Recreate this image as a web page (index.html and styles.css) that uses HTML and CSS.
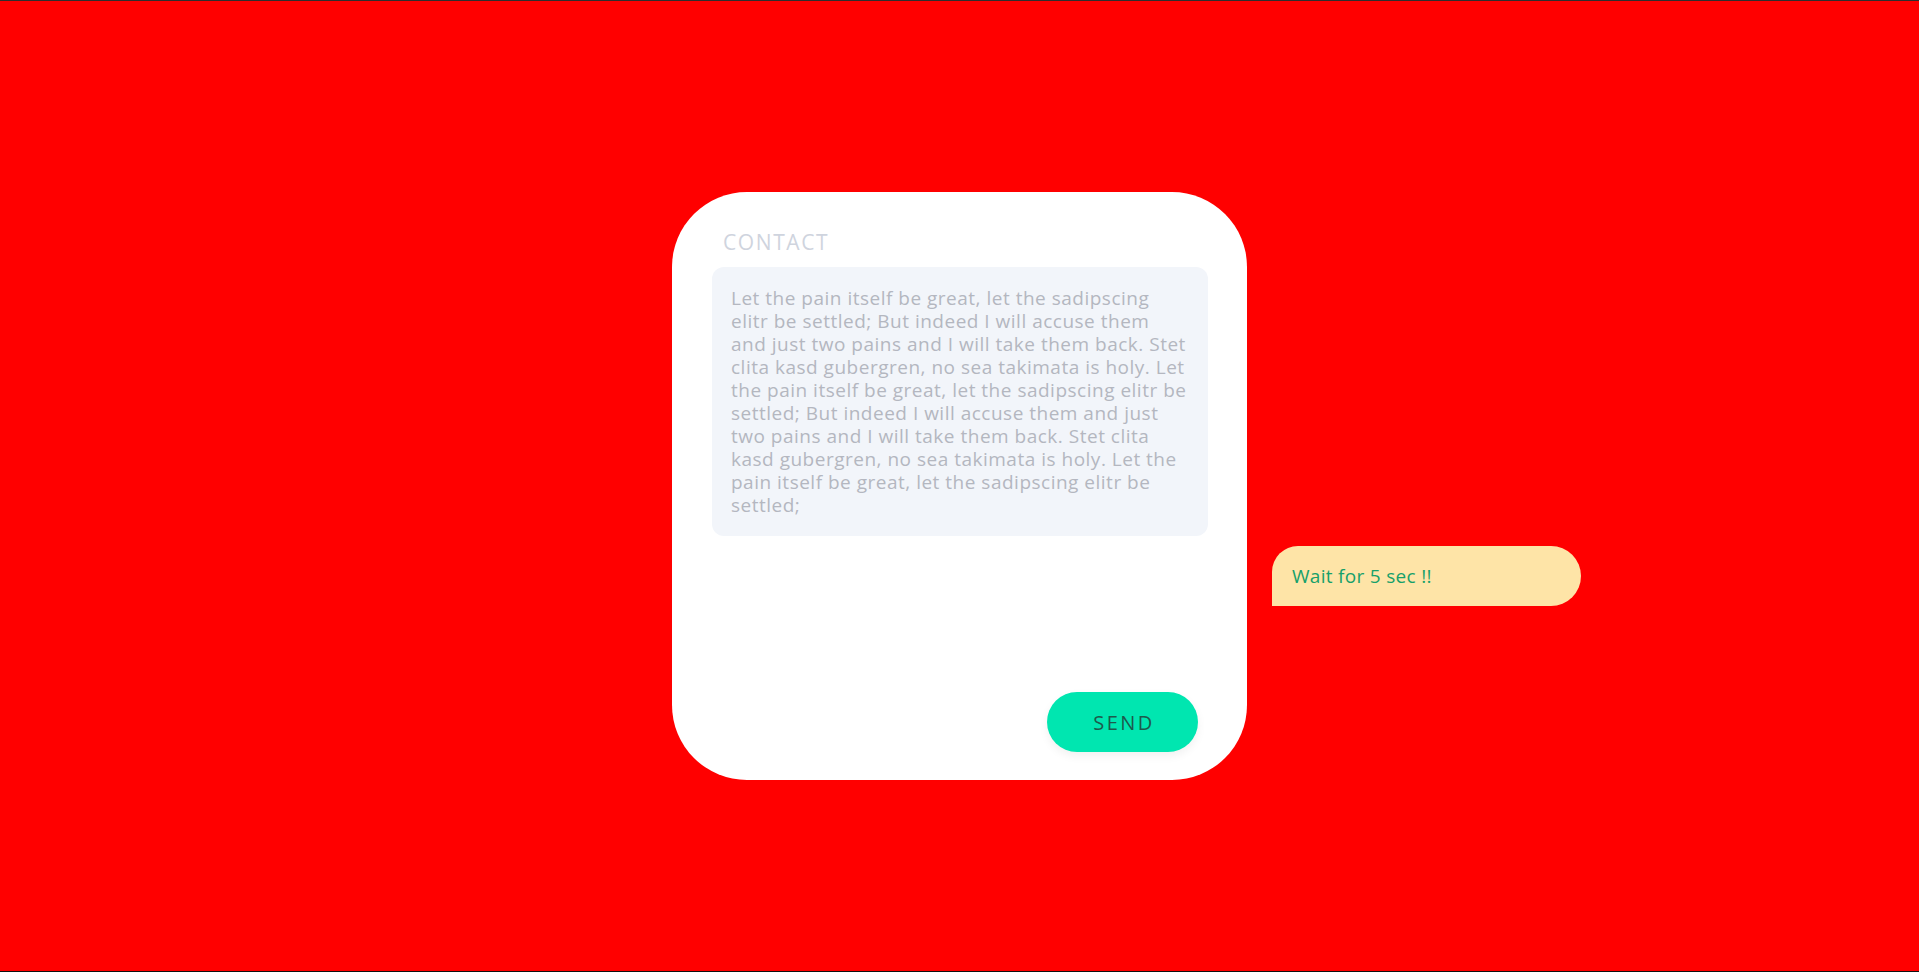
FILE: index.html
```html
<!DOCTYPE html>
<html lang="en">
<head>
<meta charset="utf-8">
<title>Contact</title>
<link rel="stylesheet" href="styles.css">
</head>
<body>
  <main class="stage">
    <form class="card">
      <h1 class="card-title">CONTACT</h1>
      <textarea class="message" wrap="off" readonly>Let the pain itself be great, let the sadipscing
elitr be settled; But indeed I will accuse them
and just two pains and I will take them back. Stet
clita kasd gubergren, no sea takimata is holy. Let
the pain itself be great, let the sadipscing elitr be
settled; But indeed I will accuse them and just
two pains and I will take them back. Stet clita
kasd gubergren, no sea takimata is holy. Let the
pain itself be great, let the sadipscing elitr be
settled;</textarea>
      <div class="actions">
        <button type="button" class="send">SEND</button>
      </div>
      <div class="toast">Wait for 5 sec !!</div>
    </form>
  </main>
</body>
</html>
```
FILE: styles.css
```css
* { box-sizing: border-box; }
html, body { height: 100%; }
body {
  margin: 0;
  background: #ff0000;
  border-top: 1px solid #2e2e2e;
  border-bottom: 1px solid #111;
  font-family: "Open Sans", "Noto Sans", sans-serif;
}
.stage {
  height: 100%;
  display: flex;
  align-items: center;
  justify-content: center;
}
.card {
  position: relative;
  width: 575px;
  height: 588px;
  background: #fff;
  border-radius: 75px;
  padding: 35px 40px 28px;
  display: flex;
  flex-direction: column;
}
.card-title {
  margin: 0 0 9px 11px;
  font-size: 21px;
  line-height: 31px;
  font-weight: 400;
  color: #cfd4de;
  letter-spacing: 1.6px;
}
.message {
  display: block;
  width: 496px;
  height: 269px;
  padding: 20px 4px 20px 19px;
  border: none;
  outline: none;
  resize: none;
  border-radius: 12px;
  background: #f2f5fa;
  font-family: "Open Sans", "Noto Sans", sans-serif;
  font-size: 19px;
  letter-spacing: 0.5px;
  line-height: 23px;
  color: #b4b7c0;
  overflow: hidden;
  white-space: pre;
}
.actions {
  margin-top: auto;
  display: flex;
  justify-content: flex-end;
  padding-right: 9px;
}
.send {
  width: 151px;
  height: 60px;
  border: none;
  border-radius: 30px;
  background: #00e6b0;
  color: #1d5a4c;
  font-family: "Open Sans", "Noto Sans", sans-serif;
  font-size: 20px;
  letter-spacing: 2.5px;
  padding: 0 0 0 3px;
  box-shadow: 0 4px 10px rgba(0, 0, 0, 0.06);
  cursor: pointer;
}
.toast {
  position: absolute;
  left: calc(100% + 25px);
  top: 354px;
  width: 309px;
  height: 60px;
  padding: 0 20px;
  display: flex;
  align-items: center;
  background: #fee4a7;
  color: #16a06a;
  font-size: 19px;
  letter-spacing: 0.3px;
  border-radius: 26px 30px 30px 0;
}
```
